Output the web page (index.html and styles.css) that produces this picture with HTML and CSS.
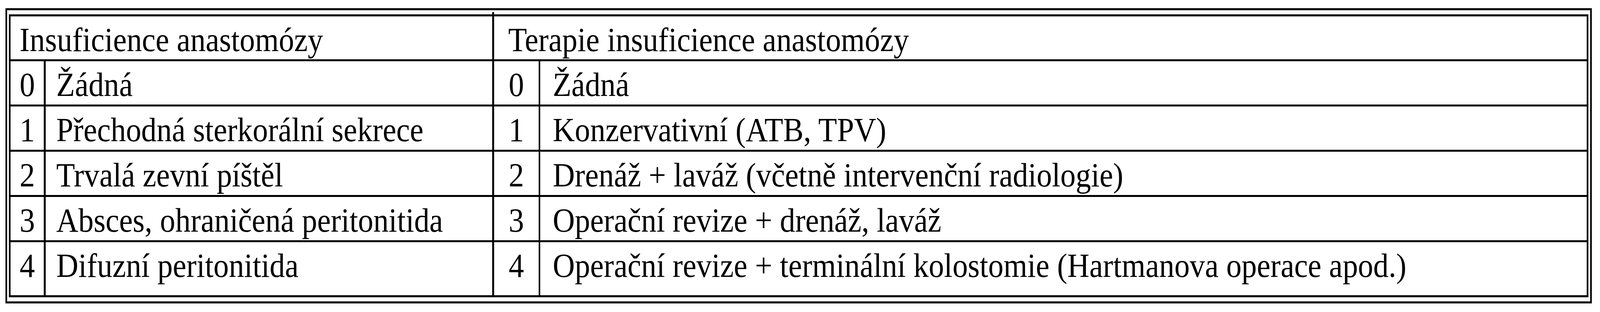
FILE: index.html
```html
<!DOCTYPE html>
<html lang="cs">
<head>
<meta charset="utf-8">
<title>Insuficience anastomózy</title>
<link rel="stylesheet" href="styles.css">
</head>
<body>
<div class="frame">
  <div class="grid">
    <div class="cell head"><span class="t">Insuficience anastomózy</span></div>
    <div class="cell head head-right"><span class="t">Terapie insuficience anastomózy</span></div>

    <div class="cell num"><span class="t">0</span></div>
    <div class="cell txt"><span class="t">Žádná</span></div>
    <div class="cell num"><span class="t">0</span></div>
    <div class="cell txt txt-right"><span class="t">Žádná</span></div>

    <div class="cell num"><span class="t">1</span></div>
    <div class="cell txt"><span class="t">Přechodná sterkorální sekrece</span></div>
    <div class="cell num"><span class="t">1</span></div>
    <div class="cell txt txt-right"><span class="t">Konzervativní (ATB, TPV)</span></div>

    <div class="cell num"><span class="t">2</span></div>
    <div class="cell txt"><span class="t">Trvalá zevní píštěl</span></div>
    <div class="cell num"><span class="t">2</span></div>
    <div class="cell txt txt-right"><span class="t">Drenáž + laváž (včetně intervenční radiologie)</span></div>

    <div class="cell num"><span class="t">3</span></div>
    <div class="cell txt"><span class="t">Absces, ohraničená peritonitida</span></div>
    <div class="cell num"><span class="t">3</span></div>
    <div class="cell txt txt-right"><span class="t">Operační revize + drenáž, laváž</span></div>

    <div class="cell num"><span class="t">4</span></div>
    <div class="cell txt"><span class="t">Difuzní peritonitida</span></div>
    <div class="cell num"><span class="t">4</span></div>
    <div class="cell txt txt-right"><span class="t">Operační revize + terminální kolostomie (Hartmanova operace apod.)</span></div>
  </div>
</div>
</body>
</html>
```

FILE: styles.css
```css
:root {
  /* horizontal unit: one pixel of the 4547px-wide design */
  --u: calc(100vw / 4547);
  /* horizontal squeeze that goes with --u (4096 / 4547) */
  --sx: 0.9008;
}

html, body {
  background: #fff;
}

body {
  margin: 0;
  padding: 21px 0 0 calc(16 * var(--u));
  font-family: "Liberation Serif", "Times New Roman", serif;
  font-size: 87px;
  color: #000;
}

.frame {
  width: fit-content;
  border-style: solid;
  border-color: #000;
  border-width: 5px calc(5 * var(--u));
  padding: 11px calc(6 * var(--u)) 11px calc(5 * var(--u));
  box-shadow: inset 0 0 0 1px #c4c4c4;
}

.grid {
  display: grid;
  grid-template-columns:
    calc(95 * var(--u))
    calc(1269 * var(--u))
    calc(127 * var(--u))
    calc(2973 * var(--u));
  grid-template-rows: 110px 111px 111px 111px 111px 136px;
  row-gap: 5px;
  column-gap: calc(5 * var(--u));
  background: #000;
  border-style: solid;
  border-color: #000;
  border-width: 5px calc(5 * var(--u));
  box-shadow: 0 0 0 1px #c4c4c4;
}

.cell {
  background: #fff;
  line-height: 96px;
  padding-top: 12px;
  white-space: nowrap;
}

.t {
  display: inline-block;
  transform: scaleX(var(--sx));
  transform-origin: 0 50%;
}

.head {
  grid-column: span 2;
  padding-left: calc(26 * var(--u));
}

.head-right {
  position: relative;
  padding-left: calc(40 * var(--u));
}

.head-right::before {
  content: "";
  position: absolute;
  left: calc(-5 * var(--u));
  top: -11px;
  width: calc(5 * var(--u));
  height: 11px;
  background: #000;
}

.num {
  text-align: center;
}

.num .t {
  transform-origin: 50% 50%;
}

.txt {
  padding-left: calc(30 * var(--u));
}

.txt-right {
  padding-left: calc(35 * var(--u));
}
```
